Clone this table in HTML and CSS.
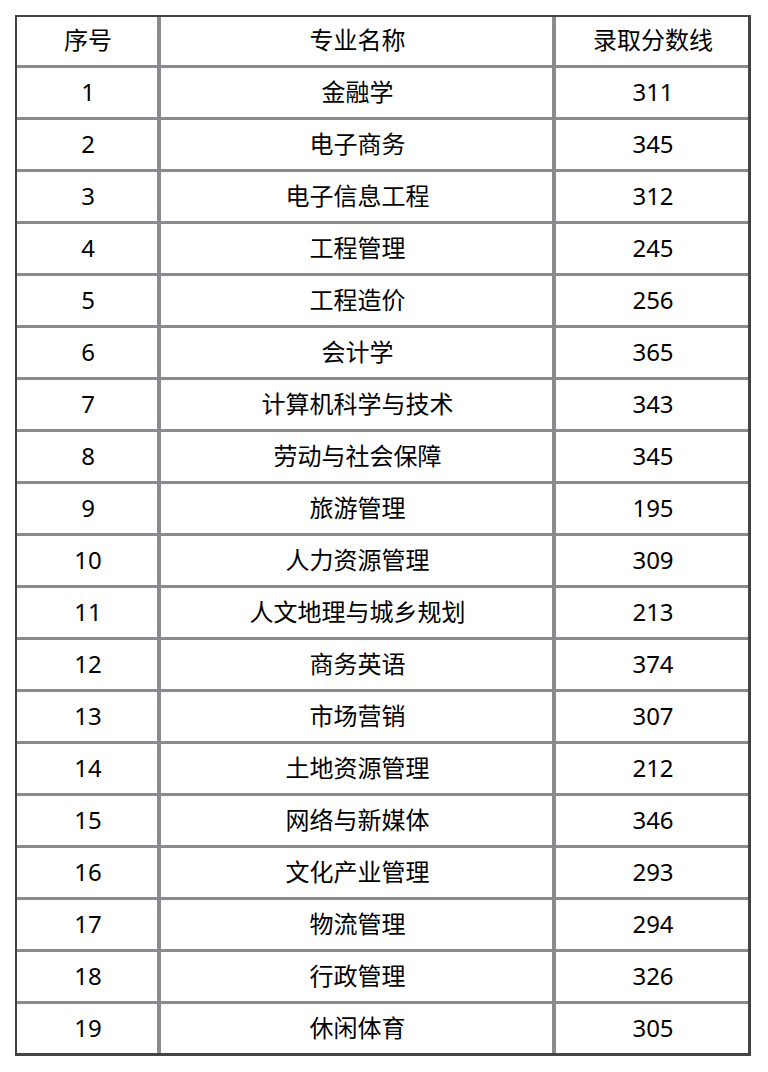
FILE: index.html
```html
<!DOCTYPE html>
<html lang="zh">
<head>
<meta charset="utf-8">
<link rel="stylesheet" href="styles.css">
</head>
<body>
<div class="table">
  <div class="cell">序号</div><div class="cell">专业名称</div><div class="cell">录取分数线</div>
  <div class="cell">1</div><div class="cell">金融学</div><div class="cell">311</div>
  <div class="cell">2</div><div class="cell">电子商务</div><div class="cell">345</div>
  <div class="cell">3</div><div class="cell">电子信息工程</div><div class="cell">312</div>
  <div class="cell">4</div><div class="cell">工程管理</div><div class="cell">245</div>
  <div class="cell">5</div><div class="cell">工程造价</div><div class="cell">256</div>
  <div class="cell">6</div><div class="cell">会计学</div><div class="cell">365</div>
  <div class="cell">7</div><div class="cell">计算机科学与技术</div><div class="cell">343</div>
  <div class="cell">8</div><div class="cell">劳动与社会保障</div><div class="cell">345</div>
  <div class="cell">9</div><div class="cell">旅游管理</div><div class="cell">195</div>
  <div class="cell">10</div><div class="cell">人力资源管理</div><div class="cell">309</div>
  <div class="cell">11</div><div class="cell">人文地理与城乡规划</div><div class="cell">213</div>
  <div class="cell">12</div><div class="cell">商务英语</div><div class="cell">374</div>
  <div class="cell">13</div><div class="cell">市场营销</div><div class="cell">307</div>
  <div class="cell">14</div><div class="cell">土地资源管理</div><div class="cell">212</div>
  <div class="cell">15</div><div class="cell">网络与新媒体</div><div class="cell">346</div>
  <div class="cell">16</div><div class="cell">文化产业管理</div><div class="cell">293</div>
  <div class="cell">17</div><div class="cell">物流管理</div><div class="cell">294</div>
  <div class="cell">18</div><div class="cell">行政管理</div><div class="cell">326</div>
  <div class="cell">19</div><div class="cell">休闲体育</div><div class="cell">305</div>
</div>
</body>
</html>
```
FILE: styles.css
```css
html, body {
  margin: 0;
  padding: 0;
  background: #ffffff;
}
body {
  padding: 15px 0 0 15px;
  font-family: "Noto Sans", "Noto Sans CJK SC", sans-serif;
  color: #000000;
}
.table {
  display: grid;
  grid-template-columns: 140px 391px 192px;
  grid-template-rows: 48px repeat(19, 49px);
  column-gap: 4px;
  row-gap: 3px;
  width: max-content;
  background: #888b8f;
  border-top: 2px solid #444444;
  border-left: 2px solid #444444;
  border-right: 3px solid #444444;
  border-bottom: 3px solid #444444;
}
.cell {
  background: #ffffff;
  display: flex;
  align-items: center;
  justify-content: center;
  font-size: 24px;
  line-height: 1;
  padding-left: 2px;
  padding-bottom: 2px;
}
```
